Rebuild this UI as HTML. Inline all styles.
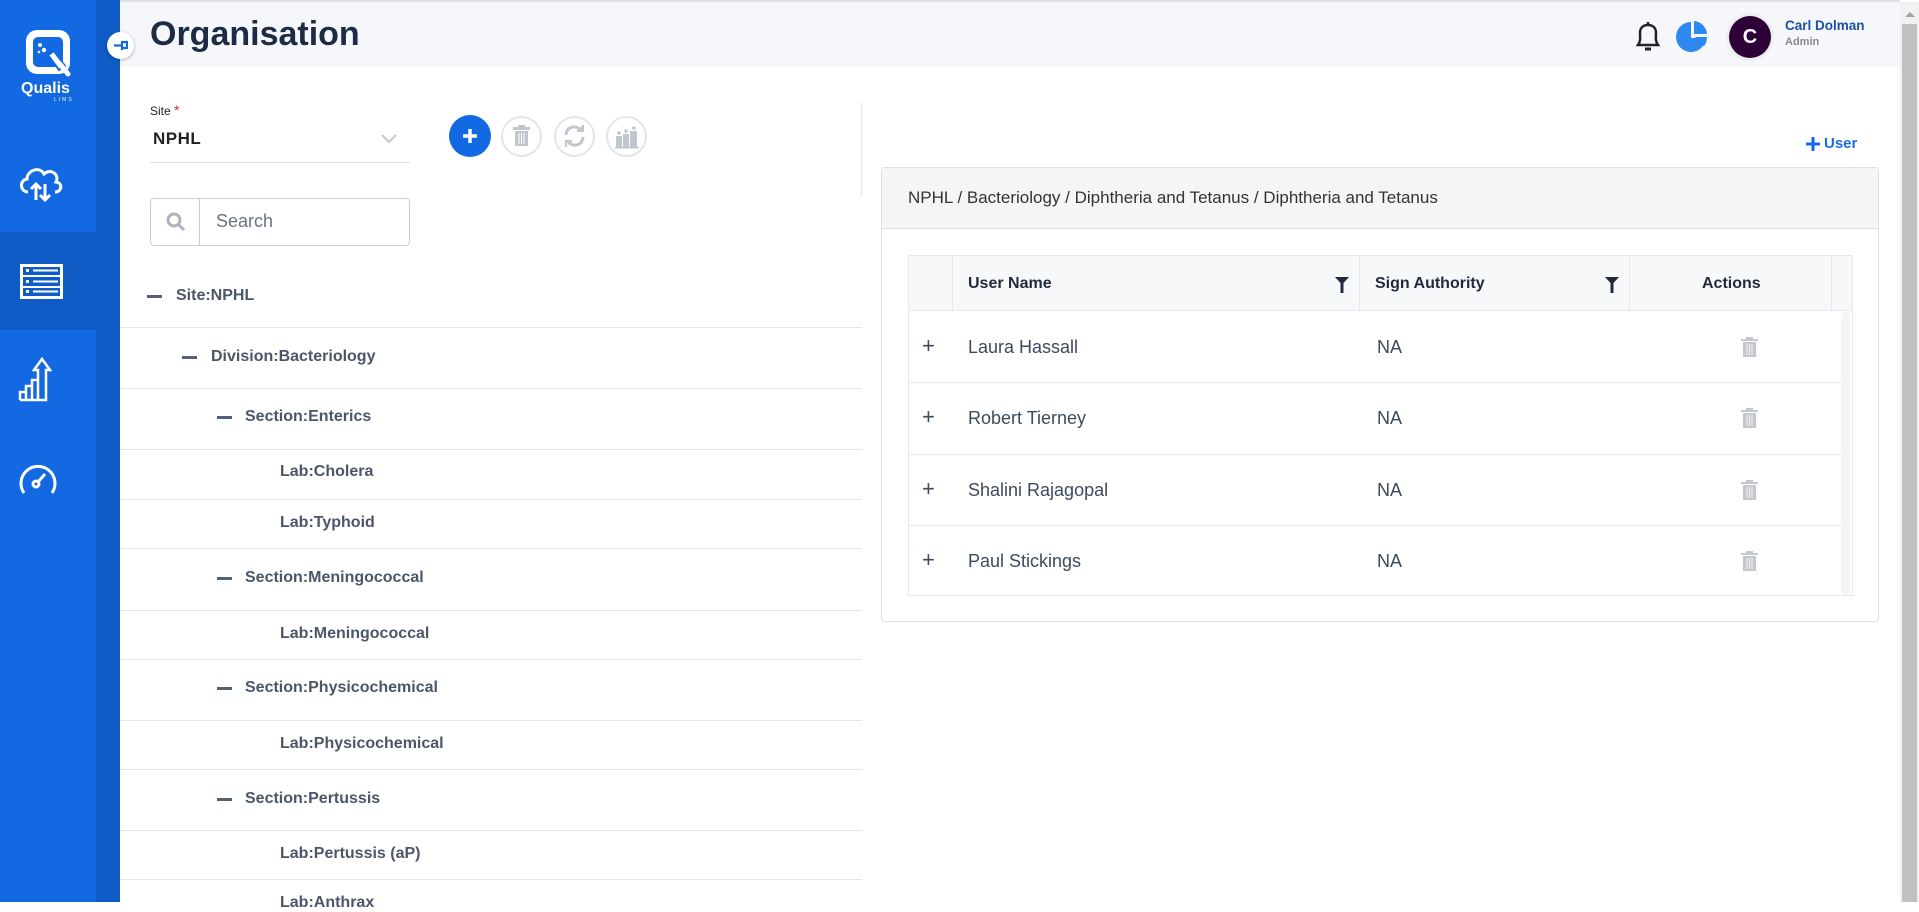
<!DOCTYPE html>
<html><head><meta charset="utf-8">
<style>
*{box-sizing:border-box;margin:0;padding:0}
body{width:1919px;height:902px;overflow:hidden;background:#fff;font-family:"Liberation Sans",sans-serif;position:relative}
.abs{position:absolute}
.sb{left:0;top:0;width:120px;height:902px;background:#0f5cc7}
.sbl{left:0;top:0;width:96px;height:902px;background:#1269e2}
.act{left:0;top:232px;width:120px;height:98px;background:#0f5cc7}
.hdr{left:120px;top:0;width:1780px;height:67px;background:#f5f7fa;border-top:2px solid #dde0e4}
.title{left:150px;top:15px;font-size:34px;font-weight:bold;color:#1d2b45;letter-spacing:0}
.row{left:120px;width:742px;border-bottom:1.5px solid #e3e5e8;height:1px}
.t{font-size:16px;font-weight:bold;color:#4b5669;white-space:nowrap}
.dash{width:15px;height:3px;background:#56607a}
.th{font-size:16px;font-weight:bold;color:#1f2a3d}
.cell{font-size:18px;color:#3d4a5e}
.vl{width:1px;background:#e6e8eb}
.hl{height:1px;background:#e6e8eb}
</style></head><body>
<div class="abs sb"></div><div class="abs sbl"></div><div class="abs act"></div>
<!-- logo -->
<svg class="abs" style="left:24px;top:28px" width="48" height="52" viewBox="0 0 48 52"><rect x="2" y="2" width="44" height="44" rx="11" fill="#fff"/><rect x="9" y="9" width="30" height="30" rx="5" fill="#1269e2"/><circle cx="16" cy="17" r="2" fill="#fff"/><circle cx="20" cy="22" r="2.2" fill="#fff"/><circle cx="15" cy="24" r="1.3" fill="#fff"/><path d="M24 27 l11 15 l6 -4 l-11 -15z" fill="#fff" stroke="#1269e2" stroke-width="2"/><path d="M36 36 L44 46" stroke="#fff" stroke-width="5" stroke-linecap="round"/></svg>
<div class="abs" style="left:21px;top:80px;font-size:16px;font-weight:bold;color:#fff">Qualis</div>
<div class="abs" style="left:54px;top:97px;font-size:5px;color:#fff;letter-spacing:2px">LIMS</div>
<!-- cloud -->
<svg class="abs" style="left:18px;top:162px" width="46" height="42" viewBox="0 0 46 42" fill="none" stroke="#fff" stroke-width="3"><path d="M10 30 C2 30 1 18 9 17 C9 8 22 4 26 12 C32 6 42 12 38 20 C45 21 44 30 37 30"/><path d="M18 38 V22 M13 27 L18 22 L23 27 M27 22 V38 M22 33 L27 38 L32 33"/></svg>
<!-- list -->
<svg class="abs" style="left:20px;top:264px" width="43" height="35" viewBox="0 0 43 35"><rect x="1.5" y="1.5" width="40" height="32" fill="none" stroke="#fff" stroke-width="3"/><path d="M3 12H40M3 23H40" stroke="#fff" stroke-width="2"/><g fill="#fff"><rect x="6" y="5" width="3" height="3"/><rect x="6" y="16" width="3" height="3"/><rect x="6" y="26" width="3" height="3"/><rect x="13" y="5.5" width="25" height="2"/><rect x="13" y="16.5" width="25" height="2"/><rect x="13" y="26.5" width="25" height="2"/></g></svg>
<!-- chart -->
<svg class="abs" style="left:18px;top:356px" width="34" height="46" viewBox="0 0 34 46" fill="none" stroke="#fff" stroke-width="2.5"><path d="M2 44V36H8V44M8 44V30H14V44M14 44V24H20V44H2M20 44V14H16L24 3L32 14H28V44H20"/></svg>
<!-- gauge -->
<svg class="abs" style="left:18px;top:460px" width="40" height="36" viewBox="0 0 40 36" fill="none" stroke="#fff" stroke-width="3"><path d="M6 33 A17 17 0 1 1 34 33"/><circle cx="18" cy="24" r="3"/><path d="M20 22 L27 14"/></svg>

<div class="abs hdr"></div>
<div class="abs" style="left:107px;top:32px;width:27px;height:27px;border-radius:50%;background:#fff;box-shadow:0 1px 3px rgba(0,0,0,.3)"></div>
<svg class="abs" style="left:113px;top:39px" width="15" height="13" viewBox="0 0 15 13"><path d="M1 6.5H9M9 2V11M9 3H14V9H9" stroke="#1269e2" stroke-width="2.2" fill="none"/></svg>
<div class="abs title">Organisation</div>
<!-- bell -->
<svg class="abs" style="left:1634px;top:20px" width="28" height="32" viewBox="0 0 28 32" fill="none" stroke="#222" stroke-width="2.5"><path d="M4 25 C7 21 6 17 6 13 C6 8 9 5 14 5 C19 5 22 8 22 13 C22 17 21 21 24 25 Z"/><path d="M14 2V5"/><path d="M11 29 H17" stroke-width="3"/></svg>
<!-- pie -->
<svg class="abs" style="left:1676px;top:20px" width="33" height="32" viewBox="0 0 33 32"><path d="M15 2 A15 15 0 1 0 30 18 L15 18 Z" fill="#2f87f0"/><path d="M18 1 A14 14 0 0 1 31 14 L18 14Z" fill="#2f87f0"/><path d="M19 17 L31 17 A14 14 0 0 1 28 26Z" fill="#2f87f0"/></svg>
<div class="abs" style="left:1729px;top:16px;width:42px;height:42px;border-radius:50%;background:#2d0038;box-shadow:0 0 0 3px #eceef1;color:#fff;font-weight:bold;font-size:20px;text-align:center;line-height:42px">C</div>
<div class="abs" style="left:1785px;top:18px;font-size:13.5px;font-weight:bold;color:#1b4fa8">Carl Dolman</div>
<div class="abs" style="left:1785px;top:36px;font-size:11px;font-weight:bold;color:#8a8a8a">Admin</div>
<!-- page scrollbar -->
<div class="abs" style="left:1900px;top:2px;width:19px;height:900px;background:#f1f1f1"></div>
<div class="abs" style="left:1902px;top:24px;width:15px;height:878px;background:#c1c1c1"></div>
<div class="abs" style="left:1905px;top:12px;width:0;height:0;border-left:5px solid transparent;border-right:5px solid transparent;border-bottom:5px solid #a3a3a3"></div>

<!-- site -->
<div class="abs" style="left:150px;top:102px;font-size:12px;color:#222">Site <span style="color:#e02020;font-size:14px">*</span></div>
<div class="abs" style="left:153px;top:129px;font-size:17px;color:#222;font-weight:bold;letter-spacing:0.5px">NPHL</div>
<svg class="abs" style="left:381px;top:134px" width="16" height="10" viewBox="0 0 16 10"><path d="M1 1L8 8L15 1" stroke="#c5c7cb" stroke-width="2" fill="none"/></svg>
<div class="abs hl" style="left:150px;top:162px;width:260px;background:#dfe2e6"></div>
<!-- buttons -->
<div class="abs" style="left:449px;top:115px;width:42px;height:42px;border-radius:50%;background:#1269e2"></div>
<svg class="abs" style="left:460px;top:126px" width="20" height="20"><path d="M10 3V17M3 10H17" stroke="#fff" stroke-width="3.5"/></svg>
<div class="abs" style="left:501px;top:116px;width:41px;height:41px;border-radius:50%;border:2px solid #e2e5ea"></div>
<svg class="abs" style="left:511px;top:125px" width="21" height="22" viewBox="0 0 21 22" fill="#c0c6d0"><rect x="2" y="2" width="17" height="3"/><rect x="7" y="0" width="7" height="3"/><path d="M4 6H17V21H4Z"/><path d="M8 8V19M10.5 8V19M13 8V19" stroke="#fff" stroke-width="1"/></svg>
<div class="abs" style="left:554px;top:116px;width:41px;height:41px;border-radius:50%;border:2px solid #e2e5ea"></div>
<svg class="abs" style="left:563px;top:125px" width="23" height="22" viewBox="0 0 23 22" fill="none" stroke="#c0c6d0" stroke-width="3"><path d="M3 10 A8 8 0 0 1 18 6"/><path d="M20 12 A8 8 0 0 1 5 16"/><path d="M14 6H20V0" fill="#c0c6d0" stroke-width="2"/><path d="M9 16H3V22" stroke-width="2"/></svg>
<div class="abs" style="left:606px;top:116px;width:41px;height:41px;border-radius:50%;border:2px solid #e2e5ea"></div>
<svg class="abs" style="left:614px;top:124px" width="26" height="26" viewBox="0 0 26 26" fill="#c0c6d0"><circle cx="5" cy="9" r="1.8"/><circle cx="12" cy="7" r="1.8"/><circle cx="20" cy="4" r="1.8"/><rect x="2" y="12" width="6" height="11"/><rect x="9" y="10" width="6" height="13"/><rect x="16" y="7" width="7" height="16"/><rect x="1" y="23" width="24" height="1.5"/></svg>
<div class="abs vl" style="left:861px;top:102px;height:94px"></div>
<!-- search -->
<div class="abs" style="left:150px;top:198px;width:260px;height:48px;border:1.5px solid #c9ced6;border-radius:4px"></div>
<div class="abs vl" style="left:199px;top:199px;height:46px;background:#c9ced6"></div>
<svg class="abs" style="left:165px;top:211px" width="22" height="22" viewBox="0 0 22 22" fill="none" stroke="#aeb4bd" stroke-width="3"><circle cx="9" cy="9" r="6"/><path d="M13.5 13.5L19 19"/></svg>
<div class="abs" style="left:216px;top:211px;font-size:18px;color:#6b7280">Search</div>

<!-- tree -->
<div class="abs dash" style="left:147px;top:295px"></div><div class="abs t" style="left:176px;top:287px">Site:NPHL</div>
<div class="abs row" style="top:327px"></div>
<div class="abs dash" style="left:182px;top:356px"></div><div class="abs t" style="left:211px;top:348px">Division:Bacteriology</div>
<div class="abs row" style="top:388px"></div>
<div class="abs dash" style="left:217px;top:416px"></div><div class="abs t" style="left:245px;top:408px">Section:Enterics</div>
<div class="abs row" style="top:449px"></div>
<div class="abs t" style="left:280px;top:463px">Lab:Cholera</div>
<div class="abs row" style="top:499px"></div>
<div class="abs t" style="left:280px;top:514px">Lab:Typhoid</div>
<div class="abs row" style="top:548px"></div>
<div class="abs dash" style="left:217px;top:577px"></div><div class="abs t" style="left:245px;top:569px">Section:Meningococcal</div>
<div class="abs row" style="top:610px"></div>
<div class="abs t" style="left:280px;top:625px">Lab:Meningococcal</div>
<div class="abs row" style="top:659px"></div>
<div class="abs dash" style="left:217px;top:687px"></div><div class="abs t" style="left:245px;top:679px">Section:Physicochemical</div>
<div class="abs row" style="top:720px"></div>
<div class="abs t" style="left:280px;top:735px">Lab:Physicochemical</div>
<div class="abs row" style="top:769px"></div>
<div class="abs dash" style="left:217px;top:798px"></div><div class="abs t" style="left:245px;top:790px">Section:Pertussis</div>
<div class="abs row" style="top:830px"></div>
<div class="abs t" style="left:280px;top:845px">Lab:Pertussis (aP)</div>
<div class="abs row" style="top:879px"></div>
<div class="abs t" style="left:280px;top:894px">Lab:Anthrax</div>

<!-- right -->
<svg class="abs" style="left:1805px;top:136px" width="16" height="16"><path d="M8 1V15M1 8H15" stroke="#1269e2" stroke-width="3"/></svg>
<div class="abs" style="left:1824px;top:135px;font-size:15px;font-weight:bold;color:#1a6de0">User</div>
<div class="abs" style="left:881px;top:167px;width:998px;height:455px;border:1.5px solid #dcdfe3;border-radius:4px"></div>
<div class="abs" style="left:882px;top:168px;width:996px;height:61px;background:#f5f5f5;border-bottom:1.5px solid #dcdfe3"></div>
<div class="abs" style="left:908px;top:188px;font-size:17px;color:#333">NPHL / Bacteriology / Diphtheria and Tetanus / Diphtheria and Tetanus</div>
<!-- table -->
<div class="abs" style="left:908px;top:255px;width:945px;height:341px;border:1px solid #e6e8eb"></div>
<div class="abs" style="left:909px;top:256px;width:943px;height:55px;background:#f7f8fa;border-bottom:1px solid #e6e8eb"></div>
<div class="abs vl" style="left:952px;top:256px;height:55px"></div>
<div class="abs vl" style="left:1359px;top:256px;height:55px"></div>
<div class="abs vl" style="left:1629px;top:256px;height:55px"></div>
<div class="abs vl" style="left:1831px;top:256px;height:55px"></div>
<div class="abs th" style="left:968px;top:275px">User Name</div>
<div class="abs th" style="left:1375px;top:275px">Sign Authority</div>
<div class="abs th" style="left:1702px;top:275px">Actions</div>
<svg class="abs" style="left:1335px;top:277px" width="14" height="16" viewBox="0 0 14 16"><path d="M0 0H14L8.5 6V16H5.5V6Z" fill="#1f2a3d"/></svg>
<svg class="abs" style="left:1605px;top:277px" width="14" height="16" viewBox="0 0 14 16"><path d="M0 0H14L8.5 6V16H5.5V6Z" fill="#1f2a3d"/></svg>
<div class="abs" style="left:1841px;top:312px;width:9px;height:283px;background:#f3f4f6;border-radius:4px"></div>
<div class="abs hl" style="left:909px;top:382px;width:932px"></div>
<div class="abs hl" style="left:909px;top:454px;width:932px"></div>
<div class="abs hl" style="left:909px;top:525px;width:932px"></div>

<div class="abs cell" style="left:922px;top:333px;font-size:22px">+</div>
<div class="abs cell" style="left:968px;top:337px">Laura Hassall</div>
<div class="abs cell" style="left:1377px;top:337px">NA</div>
<div class="abs cell" style="left:922px;top:404px;font-size:22px">+</div>
<div class="abs cell" style="left:968px;top:408px">Robert Tierney</div>
<div class="abs cell" style="left:1377px;top:408px">NA</div>
<div class="abs cell" style="left:922px;top:476px;font-size:22px">+</div>
<div class="abs cell" style="left:968px;top:480px">Shalini Rajagopal</div>
<div class="abs cell" style="left:1377px;top:480px">NA</div>
<div class="abs cell" style="left:922px;top:547px;font-size:22px">+</div>
<div class="abs cell" style="left:968px;top:551px">Paul Stickings</div>
<div class="abs cell" style="left:1377px;top:551px">NA</div>
<svg class="abs" style="left:1741px;top:337px" width="17" height="20" viewBox="0 0 17 20" fill="#c4c8ce"><rect x="0" y="2" width="17" height="2"/><rect x="5" y="0" width="7" height="2"/><path d="M2 5H15V20H2Z"/><path d="M6 7V18M8.5 7V18M11 7V18" stroke="#fff" stroke-width="0.8"/></svg>
<svg class="abs" style="left:1741px;top:408px" width="17" height="20" viewBox="0 0 17 20" fill="#c4c8ce"><rect x="0" y="2" width="17" height="2"/><rect x="5" y="0" width="7" height="2"/><path d="M2 5H15V20H2Z"/><path d="M6 7V18M8.5 7V18M11 7V18" stroke="#fff" stroke-width="0.8"/></svg>
<svg class="abs" style="left:1741px;top:480px" width="17" height="20" viewBox="0 0 17 20" fill="#c4c8ce"><rect x="0" y="2" width="17" height="2"/><rect x="5" y="0" width="7" height="2"/><path d="M2 5H15V20H2Z"/><path d="M6 7V18M8.5 7V18M11 7V18" stroke="#fff" stroke-width="0.8"/></svg>
<svg class="abs" style="left:1741px;top:551px" width="17" height="20" viewBox="0 0 17 20" fill="#c4c8ce"><rect x="0" y="2" width="17" height="2"/><rect x="5" y="0" width="7" height="2"/><path d="M2 5H15V20H2Z"/><path d="M6 7V18M8.5 7V18M11 7V18" stroke="#fff" stroke-width="0.8"/></svg>
</body></html>
